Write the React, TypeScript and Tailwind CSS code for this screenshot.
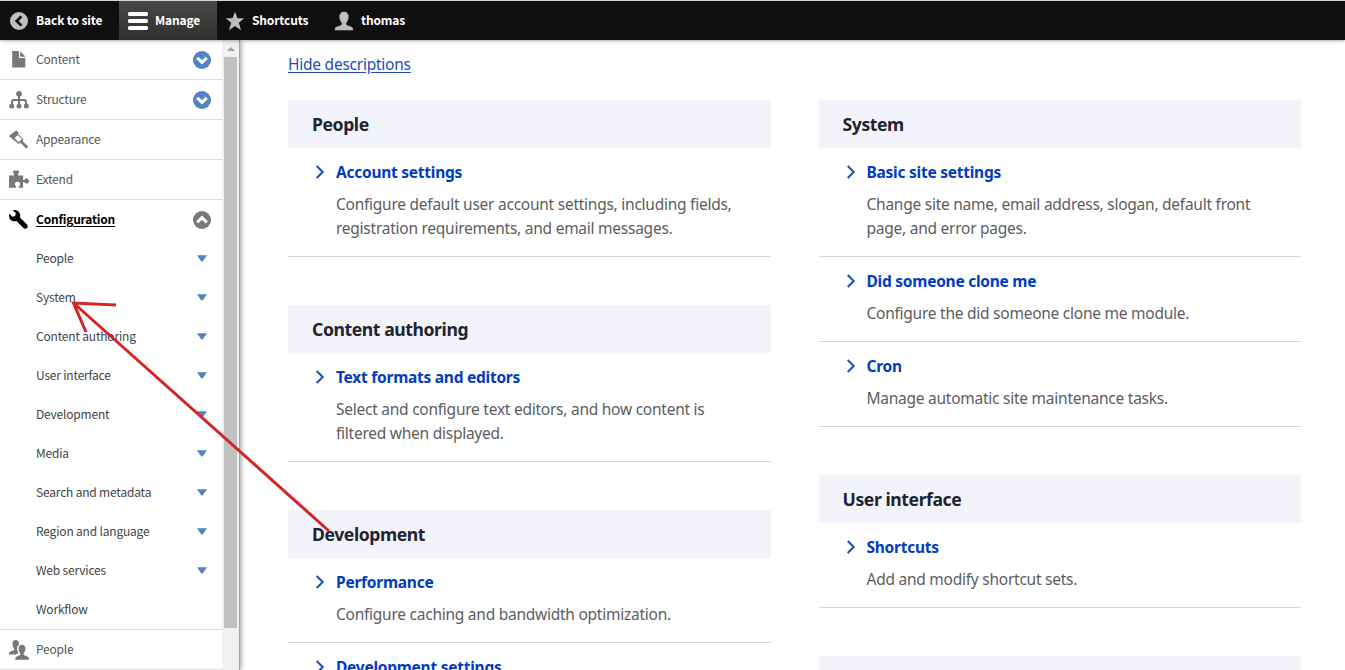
import type { ReactNode } from 'react';

type Entry = { title: string; lines: string[] };
type Block = { heading: string; entries: Entry[] };

const leftBlocks: Block[] = [
  {
    heading: 'People',
    entries: [
      {
        title: 'Account settings',
        lines: ['Configure default user account settings, including fields,', 'registration requirements, and email messages.'],
      },
    ],
  },
  {
    heading: 'Content authoring',
    entries: [
      {
        title: 'Text formats and editors',
        lines: ['Select and configure text editors, and how content is', 'filtered when displayed.'],
      },
    ],
  },
  {
    heading: 'Development',
    entries: [
      { title: 'Performance', lines: ['Configure caching and bandwidth optimization.'] },
      { title: 'Development settings', lines: [] },
    ],
  },
];

const rightBlocks: Block[] = [
  {
    heading: 'System',
    entries: [
      {
        title: 'Basic site settings',
        lines: ['Change site name, email address, slogan, default front', 'page, and error pages.'],
      },
      { title: 'Did someone clone me', lines: ['Configure the did someone clone me module.'] },
      { title: 'Cron', lines: ['Manage automatic site maintenance tasks.'] },
    ],
  },
  {
    heading: 'User interface',
    entries: [{ title: 'Shortcuts', lines: ['Add and modify shortcut sets.'] }],
  },
  { heading: '', entries: [] },
];

const configChildren = [
  'People',
  'System',
  'Content authoring',
  'User interface',
  'Development',
  'Media',
  'Search and metadata',
  'Region and language',
  'Web services',
  'Workflow',
];

function Icon({ children }: { children: ReactNode }) {
  return (
    <svg viewBox="0 0 20 20" className="h-5 w-5 shrink-0" fill="currentColor">
      {children}
    </svg>
  );
}

const BackIcon = () => (
  <Icon>
    <path
      fillRule="evenodd"
      d="M10 1a9 9 0 1 0 0 18a9 9 0 0 0 0-18zM11.4 4.4l2 1.9L9.7 10l3.7 3.7l-2 1.9L5.8 10z"
    />
  </Icon>
);

const MenuIcon = () => (
  <Icon>
    <rect x="0" y="1" width="20" height="4" rx="1.6" />
    <rect x="0" y="8" width="20" height="4" rx="1.6" />
    <rect x="0" y="15" width="20" height="4" rx="1.6" />
  </Icon>
);

const StarIcon = () => (
  <Icon>
    <path d="M10 .8l2.4 6.5h6.8l-5.400 4.400l2.200 7.500L10 15l-6 4.200l2.200-7.500L.8 7.300h6.800z" />
  </Icon>
);

const UserIcon = () => (
  <Icon>
    <path d="M10 .8c3 0 4.600 2.100 4.600 5c0 2.500-.9 4.300-2.100 5.700c-.7.9-.5 2.300.5 2.800l4.200 1.500c1.300.5 1.900 1.500 2 3.400H.6c.1-1.900.8-2.900 2.100-3.400L7 14.300c1-.5 1.200-1.900.5-2.800C6.300 10.100 5.400 8.300 5.400 5.800c0-2.900 1.600-5 4.600-5z" />
  </Icon>
);

const FileIcon = () => (
  <Icon>
    <path d="M3.200 1h6.800v7h6.300v9.500H3.200z" />
    <path d="M11.200 1.200l5.400 5.600h-5.400z" />
  </Icon>
);

const StructureIcon = () => (
  <Icon>
    <circle cx="10" cy="3.800" r="2.900" />
    <path d="M9 5h2v4h4c2.100 0 3 1 3 3v3h-2v-2.500c0-1-.4-1.500-1.300-1.500H11v4H9v-4H5.300C4.400 11 4 11.500 4 12.500V15H2v-3c0-2 .9-3 3-3h4z" />
    <circle cx="2.700" cy="16.100" r="2.500" />
    <circle cx="10" cy="16.100" r="2.500" />
    <circle cx="17.300" cy="16.100" r="2.500" />
  </Icon>
);

const BrushIcon = () => (
  <Icon>
    <path
      fillRule="evenodd"
      d="M7.300.4l2 1.900l-.3 1.200l5.500 6l-.8 1.700l4.900 4.900c.7 1.300-.7 2.700-2 2l-4.800-5l-2.200.7L0 6.200l.7-1zM9 4.900L5.500 8l4 4.100l3.500-2.900z"
    />
  </Icon>
);

const PuzzleIcon = () => (
  <Icon>
    <path d="M4.200 2.700c-.6-1-.1-2.200.9-2.200h3.800c1 0 1.500 1.200.9 2.200l-.7 1V5.500h5v4.400h1l1-1c1.500-1.100 3.900-.3 3.900 2.100s-2.400 3.200-3.900 2.100l-1-1h-1v5.600H9.700v-1.200l1-1c1.100-1.400.3-3.800-2.200-3.800s-3.300 2.400-2.200 3.800l1 1v1.200H0V5.500h5V3.700z" />
  </Icon>
);

const WrenchIcon = () => (
  <svg viewBox="0 0 16 16" className="h-5 w-5 shrink-0" fill="currentColor">
    <path d="M14.416 11.586l-.01-.008-5.656-5.657c.15-.449.252-.921.252-1.421 0-2.485-2.016-4.500-4.502-4.500-.505 0-.981.102-1.434.255l2.431 2.431-.588 2.196-2.196.588-2.445-2.445c-.162.464-.268.956-.268 1.475 0 2.486 2.014 4.500 4.500 4.500.500 0 .972-.102 1.421-.251l5.667 5.665c.781.781 2.047.781 2.828 0s.781-2.047 0-2.828z" />
  </svg>
);

const PeopleIcon = () => (
  <Icon>
    <path d="M6.700 0c2 0 3.200 1.400 3.200 3.400c0 .7-.1 1.300-.3 1.900c-1.300 1-1.700 2.300-1.500 4.300c.2 1.500.8 2.700 1.500 3.700l-3 1.100H0c0-1.500.4-2.500 1.600-2.900l2.800-1c1.100-.5 1-1.500.4-2.300C4 7.200 3.500 5.600 3.500 3.600C3.500 1.400 4.700 0 6.700 0z" />
    <path d="M13 4.800c2.200 0 3.400 1.500 3.400 3.700c0 1.900-.6 3.300-1.400 4.400c-.6.8-.6 2 .4 2.400l3 1.100c1.200.5 1.600 1.700 1.600 3.400H6.200c0-1.700.4-2.900 1.600-3.400l2.800-1.100c1-.4 1-1.600.4-2.400c-.8-1.100-1.400-2.500-1.400-4.400c0-2.200 1.200-3.700 3.400-3.700z" />
  </Icon>
);

function Disc({ up = false }: { up?: boolean }) {
  return (
    <svg viewBox="0 0 18 18" className="h-[18px] w-[18px]">
      <circle cx="9" cy="9" r="9" fill={up ? '#787878' : '#5181c6'} />
      <path
        d={up ? 'M4.200 11.300L9 6.700L13.800 11.300' : 'M4.200 6.800L9 11.400L13.800 6.800'}
        fill="none"
        stroke="#fff"
        strokeWidth="3.100"
      />
    </svg>
  );
}

function ToolbarTab({ icon, label, className }: { icon: ReactNode; label: string; className: string }) {
  return (
    <div className={`flex h-full items-center ${className}`}>
      {icon}
      <span className="ml-[7px] pb-0.5 text-[12px] font-bold leading-none tracking-[-0.15px] text-white">{label}</span>
    </div>
  );
}

function MenuRow({ icon, label, disc }: { icon: ReactNode; label: string; disc?: boolean }) {
  return (
    <div className="flex h-10 shrink-0 items-center border-b border-[#dddddd] pl-[9px] pr-[11px] text-[#787878]">
      {icon}
      <span className="ml-[7px] flex-1 pb-px text-[12px] leading-none tracking-[-0.19px] text-[#565656]">{label}</span>
      {disc && <Disc />}
    </div>
  );
}

function ConfigBlock({ block }: { block: Block }) {
  return (
    <section className="mb-12">
      <h3 className="flex h-12 items-center bg-[#f3f4f9] px-6 text-[17.6px] font-bold tracking-[-0.42px] text-[#222330]">
        {block.heading}
      </h3>
      {block.entries.map((entry) => (
        <div key={entry.title} className="flex border-b border-[#d3d4d9] pb-4 pt-3">
          <svg viewBox="0 0 48 24" className="h-6 w-12 shrink-0" fill="none" stroke="#1a4fb8" strokeWidth="2">
            <path d="M28.700 6l6 6l-6 6" />
          </svg>
          <div className="whitespace-nowrap">
            <div className="mb-2 text-[15.5px] font-bold leading-6 tracking-[-0.25px] text-[#003cc0]">{entry.title}</div>
            {entry.lines.map((line) => (
              <p key={line} className="text-[15.5px] leading-6 tracking-[-0.25px] text-[#5c5d62]">
                {line}
              </p>
            ))}
          </div>
        </div>
      ))}
    </section>
  );
}

export default function App() {
  return (
    <div className="relative flex h-[670px] w-[1345px] flex-col overflow-hidden bg-white font-['Noto_Sans',sans-serif]">
      <header className="z-20 flex h-10 shrink-0 border-t border-[#cfd6d4] bg-[#0f0f0f] font-['Noto_Sans_CJK_SC',sans-serif] text-[#bebebe] shadow-[0_0_4px_rgba(0,0,0,0.5)]">
        <ToolbarTab icon={<BackIcon />} label="Back to site" className="w-[119px] pl-[9px]" />
        <div className="h-full bg-linear-to-b from-[#484848] to-[#303030] text-white">
          <ToolbarTab icon={<MenuIcon />} label="Manage" className="w-[98px] pl-[9px]" />
        </div>
        <ToolbarTab icon={<StarIcon />} label="Shortcuts" className="w-[109px] pl-[8px]" />
        <ToolbarTab icon={<UserIcon />} label="thomas" className="pl-[8px]" />
      </header>

      <div className="flex min-h-0 flex-1">
        <aside className="z-10 flex w-60 shrink-0 border-r border-[#a5a5a5] bg-white font-['Noto_Sans_CJK_SC',sans-serif] shadow-[1px_0_5px_rgba(0,0,0,0.4)]">
          <nav className="flex w-[222px] flex-col">
            <MenuRow icon={<FileIcon />} label="Content" disc />
            <MenuRow icon={<StructureIcon />} label="Structure" disc />
            <MenuRow icon={<BrushIcon />} label="Appearance" />
            <MenuRow icon={<PuzzleIcon />} label="Extend" />
            <div className="flex h-[39px] shrink-0 items-center pl-[9px] pr-[11px]">
              <WrenchIcon />
              <span className="ml-[7px] flex-1 pb-px text-[12px] font-bold leading-none tracking-[-0.2px] text-black underline underline-offset-2">
                Configuration
              </span>
              <Disc up />
            </div>
            {configChildren.map((label) => (
              <div key={label} className="flex h-[39px] shrink-0 items-center pl-9 pr-[15.5px]">
                <span className="flex-1 pb-px text-[12px] leading-none tracking-[-0.19px] text-[#444444]">{label}</span>
                {label !== 'Workflow' && (
                  <svg viewBox="0 0 10 7" className="h-[7px] w-2.5" fill="#5181c6">
                    <path d="M0 .3h10L5.600 6.600h-1.200z" />
                  </svg>
                )}
              </div>
            ))}
            <div className="h-px shrink-0 bg-[#dddddd]" />
            <MenuRow icon={<PeopleIcon />} label="People" />
          </nav>
          <div className="flex w-[17px] flex-col items-center bg-[#f1f1f1]">
            <div className="flex h-[17px] w-full items-center justify-center">
              <svg viewBox="0 0 8 4" className="h-1 w-2" fill="#a0a0a0">
                <path d="M4 0l4 4H0z" />
              </svg>
            </div>
            <div className="h-[571px] w-[13px] bg-[#c1c1c1]" />
          </div>
        </aside>

        <main className="flex-1 pl-12 pt-3">
          <a className="block h-12 whitespace-nowrap text-[15.5px] leading-6 tracking-[-0.24px] text-[#1a4fb8] underline underline-offset-2">
            Hide descriptions
          </a>
          <div className="flex items-start gap-[47.5px]">
            <div className="w-[483px]">
              {leftBlocks.map((block) => (
                <ConfigBlock key={block.heading} block={block} />
              ))}
            </div>
            <div className="w-[482.5px]">
              {rightBlocks.map((block) => (
                <ConfigBlock key={block.heading} block={block} />
              ))}
            </div>
          </div>
        </main>
      </div>

      <svg
        viewBox="0 0 270 240"
        className="absolute left-[70px] top-[298px] z-30 h-[240px] w-[270px]"
        fill="none"
        stroke="#d62424"
        strokeWidth="3"
      >
        <path d="M259 233L3.500 5M46 7L3.500 5L16 34" />
      </svg>
    </div>
  );
}
